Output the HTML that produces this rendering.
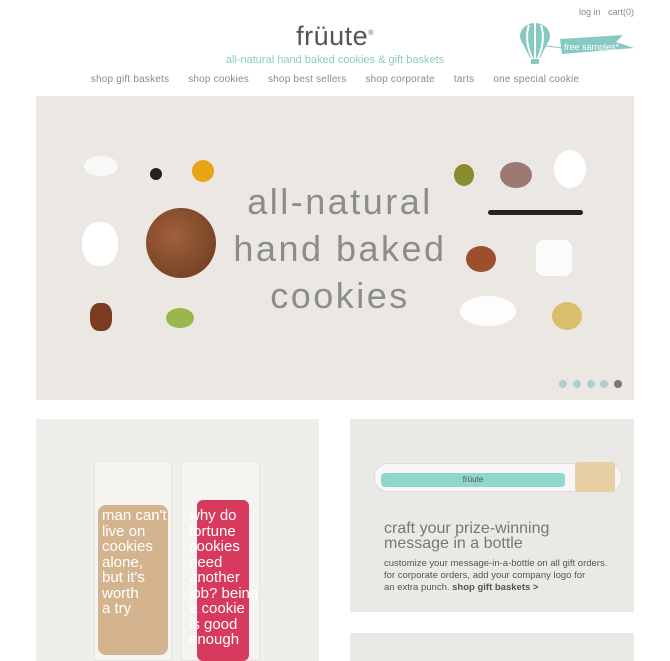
<!DOCTYPE html>
<html><head><meta charset="utf-8"><style>
*{margin:0;padding:0;box-sizing:border-box}
body{width:670px;height:661px;overflow:hidden;background:#fff;font-family:"Liberation Sans",sans-serif;position:relative}
.a{position:absolute}
.nav{top:74px;left:0;width:670px;text-align:center;font-size:10px;color:#8a8a8a;letter-spacing:0.2px}
.nav span{margin:0 8px}
.b{border-radius:50%}
</style></head><body>
<div class="a" style="top:7px;left:579px;font-size:9px;color:#888">log in &nbsp;&nbsp;cart(0)</div>
<div class="a" style="top:21px;left:0;width:670px;text-align:center;font-size:27px;color:#555;letter-spacing:0.5px">früute<sup style="font-size:7px">®</sup></div>
<div class="a" style="top:54px;left:0;width:670px;text-align:center;font-size:11px;color:#8ccbc3">all-natural hand baked cookies &amp; gift baskets</div>
<svg class="a" style="top:22px;left:518px" width="118" height="44">
<ellipse cx="17" cy="14" rx="15" ry="13" fill="#86c9c0"/><path d="M4 20 L12 36 H22 L30 20Z" fill="#86c9c0"/>
<path d="M17 1 V36 M11 3 Q6 18 14 36 M23 3 Q28 18 20 36" stroke="#fff" stroke-width="2" fill="none"/>
<rect x="13" y="37" width="8" height="5" fill="#86c9c0"/>
<line x1="28" y1="24" x2="45" y2="26" stroke="#86c9c0"/>
<path d="M42 17 L105 13 L98 20 L116 26 L44 32Z" fill="#86c9c0"/>
<text x="46" y="28" font-size="9" fill="#fff" font-family="Liberation Sans">free samples*</text></svg>
<div class="a nav"><span>shop gift baskets</span> <span>shop cookies</span> <span>shop best sellers</span> <span>shop corporate</span> <span>tarts</span> <span>one special cookie</span></div>

<div class="a" style="top:96px;left:36px;width:598px;height:304px;background:#ebe8e4"></div>
<div class="a" style="top:178px;left:180px;width:320px;text-align:center;font-size:36px;line-height:47px;color:#8c8c8c;letter-spacing:2.5px">all-natural<br>hand baked<br>cookies</div>
<div class="a b" style="left:146px;top:208px;width:70px;height:70px;background:radial-gradient(circle at 40% 40%,#a0603a,#6a3a1e)"></div>
<div class="a b" style="left:84px;top:156px;width:34px;height:20px;background:#f8f8f8"></div>
<div class="a b" style="left:150px;top:168px;width:12px;height:12px;background:#222"></div>
<div class="a b" style="left:192px;top:160px;width:22px;height:22px;background:#e9a418"></div>
<div class="a" style="left:82px;top:222px;width:36px;height:44px;background:#fff;border-radius:45%"></div>
<div class="a" style="left:90px;top:303px;width:22px;height:28px;background:#7a3b1e;border-radius:40%"></div>
<div class="a b" style="left:166px;top:308px;width:28px;height:20px;background:#9ab74c"></div>
<div class="a b" style="left:454px;top:164px;width:20px;height:22px;background:#8a8a2e"></div>
<div class="a b" style="left:500px;top:162px;width:32px;height:26px;background:#8a5c58;opacity:.8"></div>
<div class="a b" style="left:554px;top:150px;width:32px;height:38px;background:#fff"></div>
<div class="a" style="left:488px;top:210px;width:95px;height:5px;background:#2a2220;border-radius:3px"></div>
<div class="a b" style="left:466px;top:246px;width:30px;height:26px;background:#9c4f2c"></div>
<div class="a" style="left:536px;top:240px;width:36px;height:36px;background:#fbfbfb;border-radius:8px"></div>
<div class="a b" style="left:460px;top:296px;width:56px;height:30px;background:#fdfdfd"></div>
<div class="a b" style="left:552px;top:302px;width:30px;height:28px;background:#d8be6e"></div>
<div class="a b" style="left:559px;top:380px;width:8px;height:8px;background:#a9d0d2"></div>
<div class="a b" style="left:573px;top:380px;width:8px;height:8px;background:#a9d0d2"></div>
<div class="a b" style="left:587px;top:380px;width:8px;height:8px;background:#a9d0d2"></div>
<div class="a b" style="left:600px;top:380px;width:8px;height:8px;background:#a9d0d2"></div>
<div class="a b" style="left:614px;top:380px;width:8px;height:8px;background:#777"></div>

<div class="a" style="top:419px;left:36px;width:283px;height:242px;background:#efeeeb"></div>
<div class="a" style="top:461px;left:94px;width:78px;height:200px;background:#f6f4f1;border:1px solid #e6e4e0"></div>
<div class="a" style="top:505px;left:98px;width:70px;height:150px;background:#d4b48e;border-radius:8px"></div>
<div class="a" style="top:461px;left:181px;width:79px;height:200px;background:#f6f4f1;border:1px solid #e6e4e0"></div>
<div class="a" style="top:500px;left:197px;width:52px;height:161px;background:#d83a5e;border-radius:6px"></div>
<div class="a" style="top:508px;left:102px;font-size:15px;line-height:15.5px;color:#fff">man can't<br>live on<br>cookies<br>alone,<br>but it's<br>worth<br>a try</div>
<div class="a" style="top:508px;left:189px;font-size:15px;line-height:15.5px;color:#fff">why do<br>fortune<br>cookies<br>need<br>another<br>job? being<br>a cookie<br>is good<br>enough</div>

<div class="a" style="top:419px;left:350px;width:284px;height:193px;background:#ebe9e6"></div>
<div class="a" style="top:463px;left:374px;width:248px;height:29px;background:#f7f7f7;border-radius:14px;border:1px solid #ddd"></div>
<div class="a" style="top:473px;left:381px;width:184px;height:14px;background:#8fd7cb;border-radius:4px;font-size:8px;color:#555;text-align:center;line-height:14px">früute</div>
<div class="a" style="top:462px;left:575px;width:40px;height:30px;background:#e6cfa4;border-radius:3px"></div>
<div class="a" style="top:521px;left:384px;font-size:16px;line-height:15px;color:#777">craft your prize-winning<br>message in a bottle</div>
<div class="a" style="top:558px;left:384px;font-size:9.5px;line-height:12px;color:#555">customize your message-in-a-bottle on all gift orders.<br>for corporate orders, add your company logo for<br>an extra punch. <b>shop gift baskets &gt;</b></div>
<div class="a" style="top:633px;left:350px;width:284px;height:28px;background:#ebe9e6"></div>
</body></html>
